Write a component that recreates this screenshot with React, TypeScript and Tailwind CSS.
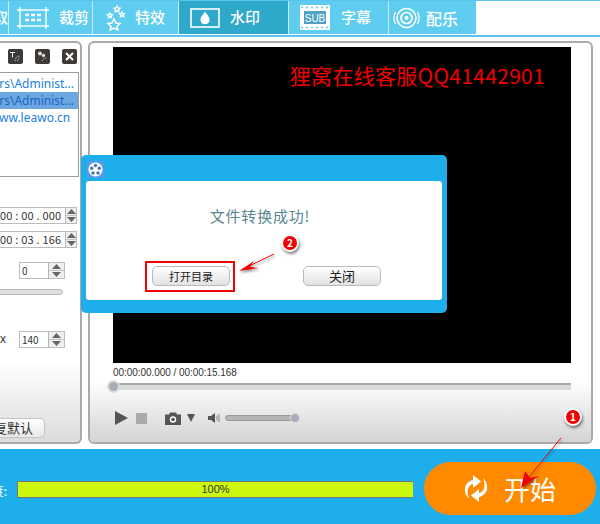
import React from "react";

const cjk = { fontFamily: '"Noto Sans CJK SC","Liberation Sans",sans-serif' };

function Tab({ w, active, icon, label, gap }: { w: string; active?: boolean; icon: React.ReactNode; label: string; gap: string }) {
  return (
    <div className={`${w} ${gap} h-full flex items-center justify-start border-r border-[#c8eefa] text-white text-[15px] font-medium ${active ? "bg-[#2fa9ca]" : "bg-[#5fcdef]"}`}>
      {icon}
      <span>{label}</span>
    </div>
  );
}

function Spin({ w = "w-[17px]" }: { w?: string }) {
  return (
    <div className={`${w} h-full flex flex-col border-l border-[#b5b5b5] bg-[#efefef]`}>
      <div className="flex-1 flex items-center justify-center border-b border-[#c4c4c4]">
        <svg width="9" height="5"><path d="M0 5L4.5 0L9 5Z" fill="#666" /></svg>
      </div>
      <div className="flex-1 flex items-center justify-center">
        <svg width="9" height="5"><path d="M0 0L4.5 5L9 0Z" fill="#666" /></svg>
      </div>
    </div>
  );
}

function TimeField({ text }: { text: string }) {
  return (
    <div className="h-[17px] w-[77px] flex border border-l-0 border-[#bdbdbd] bg-white overflow-hidden">
      <div className="flex-1 text-[11px] leading-[15px] text-[#333] text-right pr-[4px] whitespace-nowrap tracking-[0.2px]">{text}</div>
      <Spin w="w-[17px]" />
    </div>
  );
}

function NumField({ text }: { text: string }) {
  return (
    <div className="h-[17px] w-[46px] flex border border-[#bdbdbd] bg-white">
      <div className="flex-1 text-[10px] leading-[15px] text-[#333] pl-[2px]">{text}</div>
      <Spin w="w-[16px]" />
    </div>
  );
}

function ToolBtn({ children }: { children: React.ReactNode }) {
  return <div className="w-[15px] h-[15px] rounded-[2px] bg-[#3d3a38] flex items-center justify-center">{children}</div>;
}

function Badge({ n, className }: { n: string; className: string }) {
  return (
    <div className={`absolute w-[18px] h-[18px] rounded-full bg-[#f00000] border-2 border-white shadow-[1px_2px_3px_rgba(0,0,0,0.5)] text-white text-[10px] font-bold leading-[14px] text-center ${className}`}>
      {n}
    </div>
  );
}

export default function App() {
  return (
    <div className="relative w-[600px] h-[524px] overflow-hidden bg-white flex flex-col" style={cjk}>
      {/* tabs */}
      <div className="h-[37px] shrink-0 border-t border-[#5cc3ee] border-b-2 border-b-[#5cc3ee] pb-[1px] flex">
        <div className="w-[9px] h-full bg-[#5fcdef] border-r border-[#c8eefa] overflow-hidden flex items-center justify-end text-white text-[15px] font-medium whitespace-nowrap">取</div>
        <Tab w="w-[84px] pl-[8px]" gap="gap-[10px]" label="裁剪" icon={
          <svg width="32" height="22" viewBox="0 0 32 22" fill="none" stroke="#fff" strokeWidth="1.4">
            <rect x="3" y="3" width="26" height="16" />
            <path d="M0 3H3M29 3H32M0 19H3M29 19H32M3 0V3M29 0V3M3 19V22M29 19V22" />
            <path d="M8 8h4M14 8h4M20 8h4M8 13h4M14 13h4M20 13h4" strokeWidth="2.4" />
          </svg>
        } />
        <Tab w="w-[86px] pl-[13px]" gap="gap-[9px]" label="特效" icon={
          <svg width="20" height="26" viewBox="0 0 20 26" fill="none" stroke="#fff" strokeWidth="1.3">
            <path d="M8 14l2 4 4 .5-3 3 .8 3.5-3.8-2-3.8 2 .8-3.5-3-3 4-.5z" strokeWidth="1.5" />
            <path d="M11 1l1 2 2 .3-1.5 1.5.4 2-1.9-1-1.9 1 .4-2L8 3.3l2-.3z" />
            <path d="M16 7l.8 1.6 1.7.2-1.2 1.2.3 1.7-1.6-.9-1.6.9.3-1.7-1.2-1.2 1.7-.2z" />
            <path d="M4 8l.8 1.6 1.7.2-1.2 1.2.3 1.7-1.6-.9-1.6.9.3-1.7L1.2 9.8l1.7-.2z" />
          </svg>
        } />
        <Tab w="w-[110px] pl-[11px]" gap="gap-[10px]" active label="水印" icon={
          <svg width="30" height="20" viewBox="0 0 30 20" fill="none">
            <rect x="1" y="1" width="28" height="18" stroke="#fff" strokeWidth="1.6" />
            <path d="M15 3.5c2 3 4.6 5.5 4.6 8.2a4.6 4.6 0 0 1-9.2 0c0-2.7 2.6-5.2 4.6-8.2z" fill="#fff" />
          </svg>
        } />
        <Tab w="w-[100px] pl-[11px]" gap="gap-[11px]" label="字幕" icon={
          <svg width="30" height="25" viewBox="0 0 30 25" fill="none">
            <rect x="0" y="0" width="30" height="25" fill="#fff" />
            <rect x="4" y="6" width="22" height="13" fill="#4fa3c4" />
            <path d="M1 2.5h2M6 2.5h2M11 2.5h2M16 2.5h2M21 2.5h2M26 2.5h2M1 22.5h2M6 22.5h2M11 22.5h2M16 22.5h2M21 22.5h2M26 22.5h2" stroke="#5fcdef" strokeWidth="1.6" />
            <text x="15" y="17" textAnchor="middle" fontSize="10" fill="#fff" fontFamily="Liberation Sans">SUB</text>
          </svg>
        } />
        <div className="w-[87px] h-full bg-[#5fcdef] flex items-center justify-start pl-[4px] gap-[6px] text-white text-[16px] font-medium">
          <svg width="27" height="24" viewBox="0 0 27 24" fill="none" stroke="#fff">
            <circle cx="13.5" cy="12" r="9.5" strokeWidth="1.6" />
            <circle cx="13.5" cy="12" r="5.5" strokeWidth="1.6" />
            <circle cx="13.5" cy="12" r="2" fill="#fff" stroke="none" />
            <path d="M2.5 6a13 13 0 0 0 0 12M24.5 6a13 13 0 0 1 0 12" strokeWidth="1.2" />
          </svg>
          <span>配乐</span>
        </div>
      </div>

      {/* main */}
      <div className="flex-1 flex gap-[6px] pt-[4px] pb-[5px]">
        {/* left panel */}
        <div className="w-[83px] ml-[-1px] h-full flex flex-col rounded-br-[6px] rounded-tr-[6px] border-2 border-l-0 border-[#aaaaaa] bg-gradient-to-b from-white from-80% to-[#dcdcdc] overflow-hidden">
          <div className="h-[29px] pt-[6px] flex justify-end gap-[12px] pr-[3px] shrink-0">
            <ToolBtn>
              <svg width="11" height="11" viewBox="0 0 11 11" fill="none" stroke="#eee"><path d="M0 1.5h5M2.5 1.5v5" /><path d="M5 10a5 5 0 0 1 5-5M7.5 10a2.5 2.5 0 0 1 2.5-2.5" strokeDasharray="1 1" /></svg>
            </ToolBtn>
            <ToolBtn>
              <svg width="11" height="11" viewBox="0 0 11 11" fill="none" stroke="#eee"><circle cx="3" cy="2.5" r="1.5" fill="#eee" /><circle cx="6.5" cy="4.5" r="1.2" fill="#eee" /><path d="M5 10a5 5 0 0 1 5-3" strokeDasharray="1 1" /></svg>
            </ToolBtn>
            <ToolBtn>
              <svg width="9" height="9" viewBox="0 0 9 9" stroke="#fff" strokeWidth="2"><path d="M1 1l7 7M8 1l-7 7" /></svg>
            </ToolBtn>
          </div>
          <div className="h-[105px] mr-[1px] border-t border-r border-b border-[#9c9c9c] pt-[2px] shrink-0 overflow-hidden text-[12px] leading-[17px] text-[#1b7fe0] font-['Noto_Sans','Liberation_Sans',sans-serif]">
            <div className="h-[17px] whitespace-nowrap text-right pr-[4px]">rs\Administ...</div>
            <div className="h-[17px] whitespace-nowrap text-right pr-[4px] bg-[#6ea7e0] text-[#1666c4]">rs\Administ...</div>
            <div className="h-[17px] whitespace-nowrap text-right pr-[14px]">ww.leawo.cn</div>
          </div>
          <div className="pt-[30px] flex flex-col gap-[7px] items-end pr-[3px]">
            <TimeField text="00 : 00 . 000" />
            <TimeField text="00 : 03 . 166" />
          </div>
          <div className="pt-[14px] flex justify-end pr-[15px]"><NumField text="0" /></div>
          <div className="mt-[10px] mr-[17px] h-[6px] rounded-r-full border border-[#bbb] bg-[#dedede] shrink-0" />
          <div className="pt-[36px] flex justify-end items-center gap-[13px] pr-[15px]">
            <span className="text-[12px] text-[#333] leading-[17px] font-['Liberation_Sans',sans-serif]">x</span>
            <NumField text="140" />
          </div>
          <div className="flex-1" />
          <div className="mb-[4px] w-[46px] h-[20px] rounded-r-[5px] border border-l-0 border-[#c4c4c4] bg-gradient-to-b from-white to-[#e8e8e8] text-[13px] leading-[18px] text-[#333] whitespace-nowrap overflow-hidden flex justify-end pr-[11px] shrink-0">复默认</div>
        </div>

        {/* right panel */}
        <div className="w-[505px] h-full rounded-[6px] border-2 border-[#aaaaaa] flex flex-col bg-white overflow-hidden">
          <div className="pl-[23px] pr-[20px] pt-[4px]">
            <div className="h-[316px] bg-black flex justify-end">
              <span className="pt-[13px] pr-[26px] text-[21px] leading-[30px] tracking-[0.3px] text-[#f00000] font-['Noto_Sans_CJK_SC','Liberation_Sans',sans-serif] whitespace-nowrap">狸窝在线客服QQ41442901</span>
            </div>
            <div className="h-[18px] pt-[2px] text-[10px] leading-[15px] text-[#333] tracking-[-0.05px] font-['Liberation_Sans',sans-serif] whitespace-nowrap">00:00:00.000 / 00:00:15.168</div>
          </div>
          <div className="flex-1 flex flex-col bg-gradient-to-b from-white to-[#d4d4d4]">
            <div className="relative ml-[23px] mr-[20px] h-[7px] mt-[2px] border-t-2 border-[#aaa] bg-[#d8dadc] shrink-0">
              <div className="absolute left-[-6px] top-[-5px] w-[13px] h-[13px] rounded-full bg-[#a9adb8] border-2 border-[#dcdcdc]" />
            </div>
            <div className="flex items-center pl-[25px] pt-[21px]">
              <svg width="13" height="14" viewBox="0 0 13 14"><path d="M0 0L13 7L0 14Z" fill="#555" /></svg>
              <div className="w-[11px] h-[11px] bg-[#aaa] ml-[8px]" />
              <svg className="ml-[18px]" width="16" height="13" viewBox="0 0 16 13">
                <path d="M0 2.5h4L5 .5h6l1 2h4V13H0z" fill="#555" />
                <circle cx="8" cy="7.5" r="3.2" fill="#fff" /><circle cx="8" cy="7.5" r="1.8" fill="#555" />
              </svg>
              <svg className="ml-[6px]" width="8" height="8" viewBox="0 0 8 8"><path d="M0 0H8L4 8Z" fill="#555" /></svg>
              <svg className="ml-[13px]" width="12" height="12" viewBox="0 0 12 12" fill="none">
                <path d="M0 4H3L7 1V11L3 8H0Z" fill="#555" />
                <path d="M9 3.5v5M11 2v8" stroke="#888" />
              </svg>
              <div className="relative ml-[5px] w-[72px] h-[6px] rounded-full bg-[#b5b5b5] border border-[#9a9a9a]">
                <div className="absolute right-[-4px] top-[-3px] w-[10px] h-[10px] rounded-full bg-[#a9adb8] border border-[#ddd]" />
              </div>
            </div>
          </div>
        </div>
      </div>

      {/* bottom bar */}
      <div className="h-[75px] shrink-0 bg-[#1eaeec] flex items-start">
        <div className="w-[7px] pt-[34px] text-[12px] leading-[16px] text-white overflow-hidden whitespace-nowrap flex justify-end">度:</div>
        <div className="mt-[32px] ml-[10px] w-[396px] h-[17px] bg-[#cdf70d] border border-[#777] border-r-0 text-[11px] leading-[15px] text-[#333] text-center font-['Liberation_Sans',sans-serif]">100%</div>
        <div className="mt-[13px] ml-[11px] w-[172px] h-[53px] rounded-full bg-[#ff8a00] flex items-center justify-center gap-[16px] text-white text-[26px] font-normal">
          <svg width="24" height="27" viewBox="0 0 24 27" fill="#fff">
            <path d="M5 24C-2 17 0 7 9 5V0L17 6.5L9 13V9C4 10 2 16 5 24Z" />
            <path d="M5 24C-2 17 0 7 9 5V0L17 6.5L9 13V9C4 10 2 16 5 24Z" transform="rotate(180 12 13.5)" />
          </svg>
          <span>开始</span>
        </div>
      </div>

      {/* dialog */}
      <div className="absolute left-[81px] top-[155px] w-[366px] h-[158px] rounded-[5px] bg-[#1eaeec] px-[5px] pb-[13px] pt-[26px]">
        <div className="absolute left-[6px] top-[6px] w-[17px] h-[17px] rounded-[3px] bg-[#5a9ae6] flex items-center justify-center">
          <svg width="15" height="15" viewBox="0 0 15 15">
            <circle cx="7.5" cy="7.5" r="7" fill="#fff" />
            <circle cx="7.5" cy="3.5" r="1.7" fill="#4c6fc0" /><circle cx="3.7" cy="6.3" r="1.7" fill="#4c6fc0" /><circle cx="11.3" cy="6.3" r="1.7" fill="#4c6fc0" /><circle cx="5" cy="11" r="1.7" fill="#4c6fc0" /><circle cx="10" cy="11" r="1.7" fill="#4c6fc0" />
          </svg>
        </div>
        <div className="w-full h-full rounded-[3px] bg-white flex flex-col">
          <div className="pt-[25px] text-center text-[15px] leading-[20px] text-[#5a8590] tracking-[0.8px] pr-[8px]">文件转换成功!</div>
          <div className="flex mt-[40px] pl-[66px] gap-[73px]">
            <div className="w-[78px] h-[20px] rounded-[5px] border border-[#bbb] bg-gradient-to-b from-white to-[#e2e2e2] text-[11px] leading-[18px] text-[#222] text-center">打开目录</div>
            <div className="w-[78px] h-[20px] rounded-[5px] border border-[#bbb] bg-gradient-to-b from-white to-[#e2e2e2] text-[13px] leading-[18px] text-[#222] text-center">关闭</div>
          </div>
        </div>
      </div>

      {/* annotations */}
      <div className="absolute left-[145px] top-[261px] w-[90px] h-[31px] border-2 border-[#f00000]" />
      <Badge n="2" className="left-[281px] top-[234px]" />
      <Badge n="1" className="left-[564px] top-[408px]" />
      <svg className="absolute left-[235px] top-[250px] drop-shadow-[1px_2px_1px_rgba(0,0,0,0.4)]" width="45" height="30" viewBox="0 0 45 30" fill="none">
        <path d="M39 4L12 17" stroke="#f00000" strokeWidth="1" />
        <path d="M4 21L19 11L15 17L24 18Z" fill="#f00000" />
      </svg>
      <svg className="absolute left-[515px] top-[435px] drop-shadow-[1px_2px_1px_rgba(0,0,0,0.35)]" width="50" height="60" viewBox="0 0 50 60" fill="none">
        <path d="M46 3L14 42" stroke="#f00000" strokeWidth="1" />
        <path d="M6 53L10 36L15 43L24 41Z" fill="#f00000" />
      </svg>
    </div>
  );
}
